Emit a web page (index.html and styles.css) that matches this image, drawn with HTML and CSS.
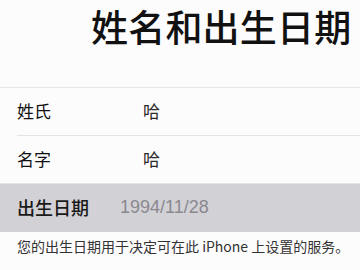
FILE: index.html
```html
<!DOCTYPE html>
<html lang="zh">
  <head>
    <meta charset="utf-8">
    <title>姓名和出生日期</title>
    <link rel="stylesheet" href="styles.css">
  </head>
  <body>
    <div class="page">
      <h1 class="title">姓名和出生日期</h1>

      <div class="group">
        <div class="row">
          <span class="label">姓氏</span>
          <span class="value">哈</span>
        </div>
        <div class="row">
          <span class="label">名字</span>
          <span class="value">哈</span>
        </div>
        <div class="row row-active">
          <span class="label">出生日期</span>
          <span class="value value-date">1994/11/28</span>
        </div>
      </div>

      <p class="note">您的出生日期用于决定可在此 iPhone 上设置的服务。</p>
    </div>
  </body>
</html>
```

FILE: styles.css
```css
* {
  margin: 0;
  padding: 0;
  box-sizing: border-box;
}

body {
  width: 360px;
  height: 270px;
  overflow: hidden;
  background-color: #fdfcfd;
  font-family: "Noto Sans CJK SC", "Noto Sans", sans-serif;
  color: #111;
}

.page {
  display: flex;
  flex-direction: column;
}

/* big heading, runs to the right edge */
.title {
  height: 88px;
  padding: 1px 0 0 91px;
  font-size: 37px;
  font-weight: 500;
  line-height: 50px;
  white-space: nowrap;
  letter-spacing: 0.2px;
  border-bottom: 1px solid #e6e5e8;
}

.group {
  display: flex;
  flex-direction: column;
}

.row {
  position: relative;
  display: flex;
  align-items: center;
  height: 48px;
  padding: 0 0 3px 17px;
  font-size: 17px;
}

.row:first-child::after {
  content: "";
  position: absolute;
  left: 17px;
  right: 0;
  bottom: 0;
  height: 1px;
  background-color: #e4e3e6;
}

.row:nth-child(2) {
  border-bottom: 1px solid #e4e3e6;
}

.label {
  width: 126px;
  font-weight: 400;
}

.value {
  color: #2a2a2a;
  font-weight: 400;
}

/* selected row */
.row-active {
  background-color: #d2d1d6;
  padding-bottom: 2px;
}

.row-active .label {
  width: 103px;
  font-size: 18px;
  font-weight: 500;
  color: #1a1a1a;
}

.value-date {
  font-family: "Liberation Sans", "Noto Sans", sans-serif;
  font-size: 18px;
  color: #8a898f;
}

.note {
  padding: 4px 0 0 17px;
  font-size: 14px;
  line-height: 20px;
  color: #333;
  white-space: nowrap;
}
```
